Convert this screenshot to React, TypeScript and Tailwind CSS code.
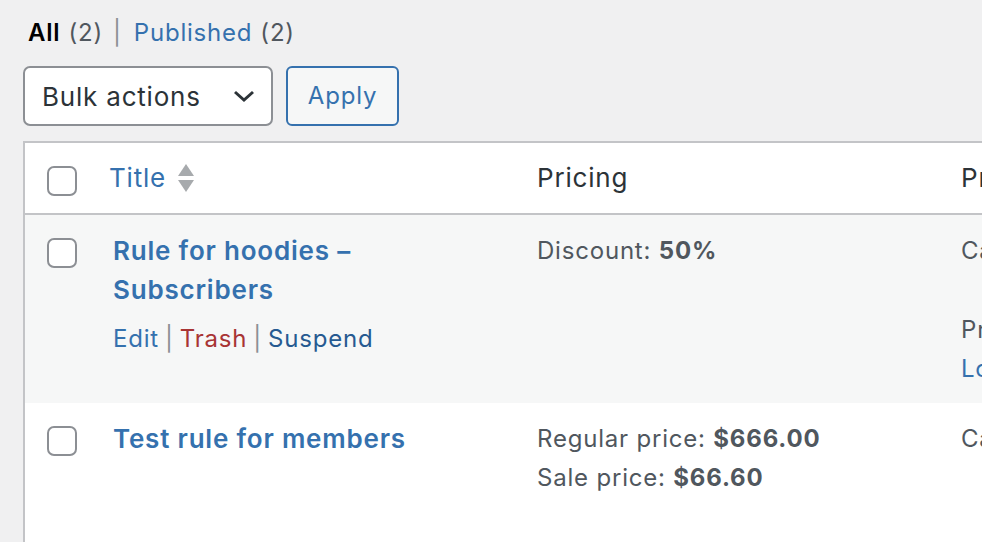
import React from 'react';

const font = { fontFamily: 'Inter, "Noto Sans", sans-serif' };

function Checkbox() {
  return (
    <span className="block w-[30px] h-[30px] rounded-[7px] border-2 border-[#8c8f94] bg-white" />
  );
}

function SortArrows() {
  return (
    <svg width="16" height="28" viewBox="0 0 16 28" className="ml-[12px]">
      <path d="M8 0 L16 12 L0 12 Z" fill="#a7aaad" />
      <path d="M0 16 L16 16 L8 28 Z" fill="#a7aaad" />
    </svg>
  );
}

function App() {
  return (
    <div
      className="w-[982px] h-[542px] overflow-hidden bg-[#f0f0f1] pl-[23px] text-[24px] tracking-[0.8px] text-[#50575e]"
      style={font}
    >
      {/* status filter */}
      <div className="pt-[14px] pl-[5px] h-[52px] flex items-center gap-[8px] leading-[34px]">
        <span className="font-semibold text-black">All</span>
        <span>(2)</span>
        <span className="text-[#8c8f94] px-[2px]">|</span>
        <span className="text-[#3571ae] ml-[2px]">Published</span>
        <span>(2)</span>
      </div>

      {/* bulk actions */}
      <div className="flex items-center gap-[13px] h-[60px] mt-[14px]">
        <div className="w-[250px] h-[60px] bg-white border-2 border-[#8c8f94] rounded-[7px] flex items-center justify-between pl-[17px] pr-[16px] text-[26px] text-[#2c3338]">
          <span>Bulk actions</span>
          <svg width="22" height="12" viewBox="0 0 22 12">
            <path d="M2 2 L11 10 L20 2" fill="none" stroke="#2c3338" strokeWidth="3" />
          </svg>
        </div>
        <div className="w-[113px] h-[60px] bg-[#f6f7f7] border-2 border-[#3571ae] rounded-[6px] flex items-center justify-center text-[#3571ae]">
          Apply
        </div>
      </div>

      {/* table */}
      <div className="mt-[15px] w-[1240px] border-t-2 border-l-2 border-[#c3c4c7] bg-white">
        <div className="grid grid-cols-[72px_428px_424px_300px] h-[72px] border-b-2 border-[#c3c4c7] text-[26px]">
          <div className="pl-[22px] pt-[23px]">
            <Checkbox />
          </div>
          <div className="pl-[12px] pt-[18px] flex items-start leading-[34px] text-[#3571ae]">
            <span>Title</span>
            <span className="pt-[3px]">
              <SortArrows />
            </span>
          </div>
          <div className="pl-[12px] pt-[18px] leading-[34px] text-[#2c3338]">Pricing</div>
          <div className="pl-[12px] pt-[18px] leading-[34px] text-[#2c3338]">Products</div>
        </div>

        <div className="grid grid-cols-[72px_428px_424px_300px] h-[188px] bg-[#f6f7f7]">
          <div className="pl-[22px] pt-[23px]">
            <Checkbox />
          </div>
          <div className="pl-[16px] pt-[16px] leading-[39px]">
            <div className="font-semibold text-[26px] text-[#3571ae] w-[270px]">Rule for hoodies – Subscribers</div>
            <div className="mt-[10px] flex gap-[6px]">
              <span className="text-[#3571ae]">Edit</span>
              <span className="text-[#8c8f94]">|</span>
              <span className="text-[#a83434]">Trash</span>
              <span className="text-[#8c8f94]">|</span>
              <span className="text-[#265a91]">Suspend</span>
            </div>
          </div>
          <div className="pl-[12px] pt-[16px] leading-[39px]">
            Discount: <span className="font-bold">50%</span>
          </div>
          <div className="pl-[12px] pt-[16px] leading-[39px] text-[#50575e]">
            <div>Categories: Hoodies</div>
            <div className="mt-[40px]">Products:</div>
            <div className="text-[#3571ae]">Logo Collection</div>
          </div>
        </div>

        <div className="grid grid-cols-[72px_428px_424px_300px] h-[200px] bg-white">
          <div className="pl-[22px] pt-[23px]">
            <Checkbox />
          </div>
          <div className="pl-[16px] pt-[16px] leading-[39px]">
            <div className="font-semibold text-[26px] text-[#3571ae]">Test rule for members</div>
          </div>
          <div className="pl-[12px] pt-[16px] leading-[39px]">
            <div>
              Regular price: <span className="font-bold">$666.00</span>
            </div>
            <div>
              Sale price: <span className="font-bold">$66.60</span>
            </div>
          </div>
          <div className="pl-[12px] pt-[16px] leading-[39px]">Categories: All</div>
        </div>
      </div>
    </div>
  );
}

export default App;
